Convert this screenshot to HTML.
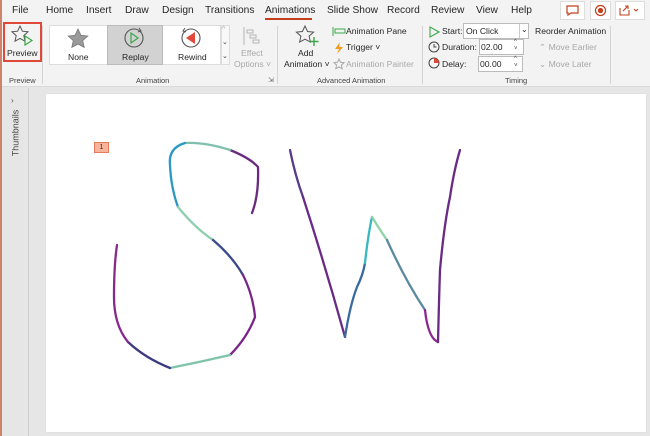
<!DOCTYPE html>
<html><head><meta charset="utf-8"><style>
*{margin:0;padding:0;box-sizing:border-box}
body{width:650px;height:436px;overflow:hidden;background:#e6e6e6;font-family:"Liberation Sans",sans-serif;position:relative;color:#262626}
.a{position:absolute;white-space:nowrap}
.t{font-size:10.2px;top:5px}
.s{font-size:8.6px}
.g{font-size:7.5px;color:#444}
.d{color:#a8a8a8}
.sep{position:absolute;top:26px;width:1px;height:58px;background:#d4d4d4}
</style></head><body>
<div class="a" style="left:0;top:0;width:650px;height:87px;background:#f3f3f3;border-bottom:1px solid #dadada"></div>
<div class="a" style="left:0;top:0;width:2px;height:436px;background:#d0826b"></div>
<div class="a t" style="left:12px">File</div>
<div class="a t" style="left:46px">Home</div>
<div class="a t" style="left:86px">Insert</div>
<div class="a t" style="left:125px">Draw</div>
<div class="a t" style="left:162px">Design</div>
<div class="a t" style="left:205px">Transitions</div>
<div class="a t" style="left:265px">Animations</div>
<div class="a" style="left:265px;top:18px;width:47px;height:2px;background:#c43e1c"></div>
<div class="a t" style="left:327px">Slide Show</div>
<div class="a t" style="left:387px">Record</div>
<div class="a t" style="left:431px">Review</div>
<div class="a t" style="left:476px">View</div>
<div class="a t" style="left:511px">Help</div>
<div class="a" style="left:560px;top:1px;width:25px;height:19px;background:#fff;border:1px solid #ddd"></div>
<svg class="a" style="left:566px;top:5px" width="13" height="11"><path d="M1 1h11v7H5l-3 2V8H1z" fill="none" stroke="#c43e1c" stroke-width="1.2"/></svg>
<div class="a" style="left:590px;top:1px;width:21px;height:19px;background:#fff;border:1px solid #ddd"></div>
<svg class="a" style="left:594px;top:4px" width="13" height="13"><circle cx="6.5" cy="6.5" r="5" fill="none" stroke="#c43e1c" stroke-width="1.2"/><circle cx="6.5" cy="6.5" r="2.6" fill="#c43e1c"/></svg>
<div class="a" style="left:615px;top:1px;width:30px;height:19px;background:#fff;border:1px solid #ddd"></div>
<svg class="a" style="left:619px;top:4px" width="22" height="12"><path d="M1 4v7h9V6M4 7l5-5M6 2h3v3" fill="none" stroke="#c43e1c" stroke-width="1.1"/><path d="M15 5l2 2 2-2" fill="none" stroke="#c43e1c"/></svg>
<!-- Preview -->
<div class="a" style="left:3px;top:22px;width:39px;height:40px;border:2px solid #e0483a"></div>
<svg class="a" style="left:11px;top:25px" width="24" height="22"><path d="M9 1l2.4 5.2 5.6.6-4.2 3.8 1.2 5.6L9 13.4 4 16.2l1.2-5.6L1 6.8l5.6-.6z" fill="none" stroke="#555" stroke-width="1"/><path d="M14 11v9l7-4.5z" fill="none" stroke="#3aa84a" stroke-width="1.2"/></svg>
<div class="a s" style="left:7px;top:48px">Preview</div>
<div class="a g" style="left:9px;top:76px">Preview</div>
<div class="sep" style="left:42px"></div>
<!-- gallery -->
<div class="a" style="left:49px;top:25px;width:172px;height:40px;background:#fff;border:1px solid #ddd"></div>
<div class="a" style="left:107px;top:25px;width:56px;height:40px;background:#d2d2d2;border:1px solid #bbb"></div>
<svg class="a" style="left:67px;top:28px" width="22" height="20"><path d="M11 1l3 6.3 6.8.7-5.1 4.6 1.5 6.8L11 16l-6.2 3.4 1.5-6.8L1.2 8l6.8-.7z" fill="#9a9a9a" stroke="#777" stroke-width=".8"/></svg>
<div class="a s" style="left:68px;top:52px">None</div>
<svg class="a" style="left:122px;top:27px" width="24" height="22"><circle cx="12" cy="11" r="9" fill="none" stroke="#555" stroke-width="1.1"/><path d="M9 6v10l7-5z" fill="none" stroke="#3aa84a" stroke-width="1.2"/><path d="M17 1l2 3-3 1" fill="none" stroke="#555"/></svg>
<div class="a s" style="left:122px;top:52px">Replay</div>
<svg class="a" style="left:179px;top:27px" width="24" height="22"><circle cx="12" cy="11" r="9" fill="none" stroke="#555" stroke-width="1.1"/><path d="M16 5v12l-9-6z" fill="#e0483a"/><path d="M6 1l-2 3 3 1" fill="none" stroke="#555"/></svg>
<div class="a s" style="left:178px;top:52px">Rewind</div>
<div class="a" style="left:221px;top:25px;width:9px;height:40px;border:1px solid #ddd;background:#f8f8f8"></div>
<div class="a" style="left:222px;top:26px;font-size:7px;color:#aaa">^</div>
<div class="a" style="left:222px;top:38px;font-size:7px;color:#444">⌄</div>
<div class="a" style="left:222px;top:52px;font-size:7px;color:#444">⌄</div>
<svg class="a" style="left:242px;top:26px" width="20" height="20"><path d="M2 1v18M5 4h6v3H5zM8 9h6v3H8zM11 14h6v3h-6z" fill="none" stroke="#b5b5b5"/></svg>
<div class="a s d" style="left:241px;top:48px">Effect</div>
<div class="a s d" style="left:234px;top:59px">Options ˅</div>
<div class="a g" style="left:136px;top:76px">Animation</div>
<div class="a" style="left:268px;top:76px;font-size:7px;color:#666">⇲</div>
<div class="sep" style="left:277px"></div>
<!-- advanced -->
<svg class="a" style="left:295px;top:25px" width="26" height="22"><path d="M10 1l2.6 5.5 6 .6-4.5 4 1.3 6L10 14.2 4.6 17.1l1.3-6L1.4 7.1l6-.6z" fill="none" stroke="#555"/><path d="M19 12v9M14.5 16.5h9" stroke="#3aa84a" stroke-width="1.4"/></svg>
<div class="a s" style="left:298px;top:48px">Add</div>
<div class="a s" style="left:284px;top:59px">Animation ˅</div>
<svg class="a" style="left:332px;top:26px" width="14" height="11"><path d="M1 1v9M3 3h10v4H3z" fill="none" stroke="#3aa84a"/></svg>
<div class="a s" style="left:346px;top:26px">Animation Pane</div>
<svg class="a" style="left:333px;top:41px" width="12" height="14"><path d="M7 1L2 8h4l-2 5 6-7H6z" fill="#f29b1f"/></svg>
<div class="a s" style="left:346px;top:42px">Trigger ˅</div>
<svg class="a" style="left:333px;top:58px" width="12" height="12"><path d="M6 1l1.5 3.3 3.5.4-2.6 2.4.8 3.6L6 9 2.8 10.7l.8-3.6L1 4.7l3.5-.4z" fill="none" stroke="#aaa"/></svg>
<div class="a s d" style="left:346px;top:59px">Animation Painter</div>
<div class="a g" style="left:317px;top:76px">Advanced Animation</div>
<div class="sep" style="left:422px"></div>
<!-- timing -->
<svg class="a" style="left:429px;top:26px" width="11" height="12"><path d="M1 1v10l9-5z" fill="none" stroke="#3aa84a" stroke-width="1.1"/></svg>
<div class="a s" style="left:442px;top:26px">Start:</div>
<div class="a" style="left:463px;top:23px;width:66px;height:16px;background:#fff;border:1px solid #bbb"></div>
<div class="a s" style="left:466px;top:26px">On Click</div>
<div class="a" style="left:519px;top:24px;width:1px;height:14px;background:#ccc"></div>
<div class="a" style="left:521px;top:25px;font-size:8px">⌄</div>
<svg class="a" style="left:428px;top:41px" width="12" height="12"><circle cx="6" cy="6" r="5" fill="none" stroke="#444"/><path d="M6 3v3h2.5" fill="none" stroke="#444"/></svg>
<div class="a s" style="left:442px;top:42px">Duration:</div>
<div class="a" style="left:479px;top:39px;width:45px;height:16px;background:#fff;border:1px solid #bbb"></div>
<div class="a s" style="left:481px;top:42px">02.00</div>
<div class="a" style="left:514px;top:39px;font-size:6px;color:#444;line-height:7px">^<br>˅</div>
<svg class="a" style="left:428px;top:57px" width="12" height="12"><circle cx="6" cy="6" r="5" fill="none" stroke="#444"/><path d="M6 6V1A5 5 0 0 1 11 6z" fill="#e0483a"/></svg>
<div class="a s" style="left:442px;top:59px">Delay:</div>
<div class="a" style="left:478px;top:56px;width:45px;height:16px;background:#fff;border:1px solid #bbb"></div>
<div class="a s" style="left:480px;top:59px">00.00</div>
<div class="a" style="left:514px;top:56px;font-size:6px;color:#444;line-height:7px">^<br>˅</div>
<div class="a s" style="left:535px;top:26px">Reorder Animation</div>
<div class="a s d" style="left:539px;top:42px">⌃ Move Earlier</div>
<div class="a s d" style="left:539px;top:59px">⌄ Move Later</div>
<div class="a g" style="left:505px;top:76px">Timing</div>
<div class="sep" style="left:610px"></div>
<!-- thumbnails pane -->
<div class="a" style="left:28px;top:88px;width:1px;height:348px;background:#cfcfcf"></div>
<div class="a" style="left:11px;top:96px;font-size:8px;color:#555">›</div>
<div class="a" style="left:-8px;top:128px;font-size:9px;color:#444;transform:rotate(-90deg);transform-origin:center">Thumbnails</div>
<!-- slide -->
<div class="a" style="left:46px;top:94px;width:600px;height:338px;background:#fff;box-shadow:0 0 1px #ccc"></div>
<div class="a" style="left:94px;top:142px;width:15px;height:11px;background:#f7b49b;border:1px solid #e57b58;font-size:7px;text-align:center;line-height:9px;color:#333">1</div>
<svg class="a" style="left:0;top:0" width="650" height="436">
<g fill="none" stroke-width="2.3" stroke-linecap="round" stroke-linejoin="round">
<path d="M252 213 Q259 195 258 167 Q250 158 230 150" stroke="#6a2a80"/>
<path d="M230 150 Q205 142 185 143" stroke="#7fbfae"/>
<path d="M185 143 Q168 148 170 165 Q171 188 178 207" stroke="#2a98c0"/>
<path d="M178 207 Q195 228 213 240" stroke="#8fcfb0"/>
<path d="M213 240 Q232 256 243 275" stroke="#3a4a8a"/>
<path d="M243 275 Q253 295 255 317 Q247 338 230 355" stroke="#7a2588"/>
<path d="M230 355 Q200 362 170 368" stroke="#7fc4a8"/>
<path d="M170 368 Q145 358 128 342" stroke="#3e3a80"/>
<path d="M128 342 Q114 325 114 297 Q114 265 117 245" stroke="#862a8e"/>
<path d="M290 150 Q295 175 303 197" stroke="#5a3a8a"/>
<path d="M303 197 Q325 265 345 337" stroke="#6a2a88"/>
<path d="M345 337 Q350 305 357 287 Q363 275 365 263" stroke="#3a6aa0"/>
<path d="M365 263 Q368 235 372 217" stroke="#3ab8c0"/>
<path d="M372 217 Q380 230 387 240" stroke="#8fd4a8"/>
<path d="M387 240 Q405 280 425 310" stroke="#5a8aa0"/>
<path d="M425 310 Q428 338 438 342" stroke="#8a2a90"/>
<path d="M438 342 Q439 300 440 270 Q444 225 450 197 Q454 170 460 150" stroke="#6a2a88"/>
</g></svg>
</body></html>
